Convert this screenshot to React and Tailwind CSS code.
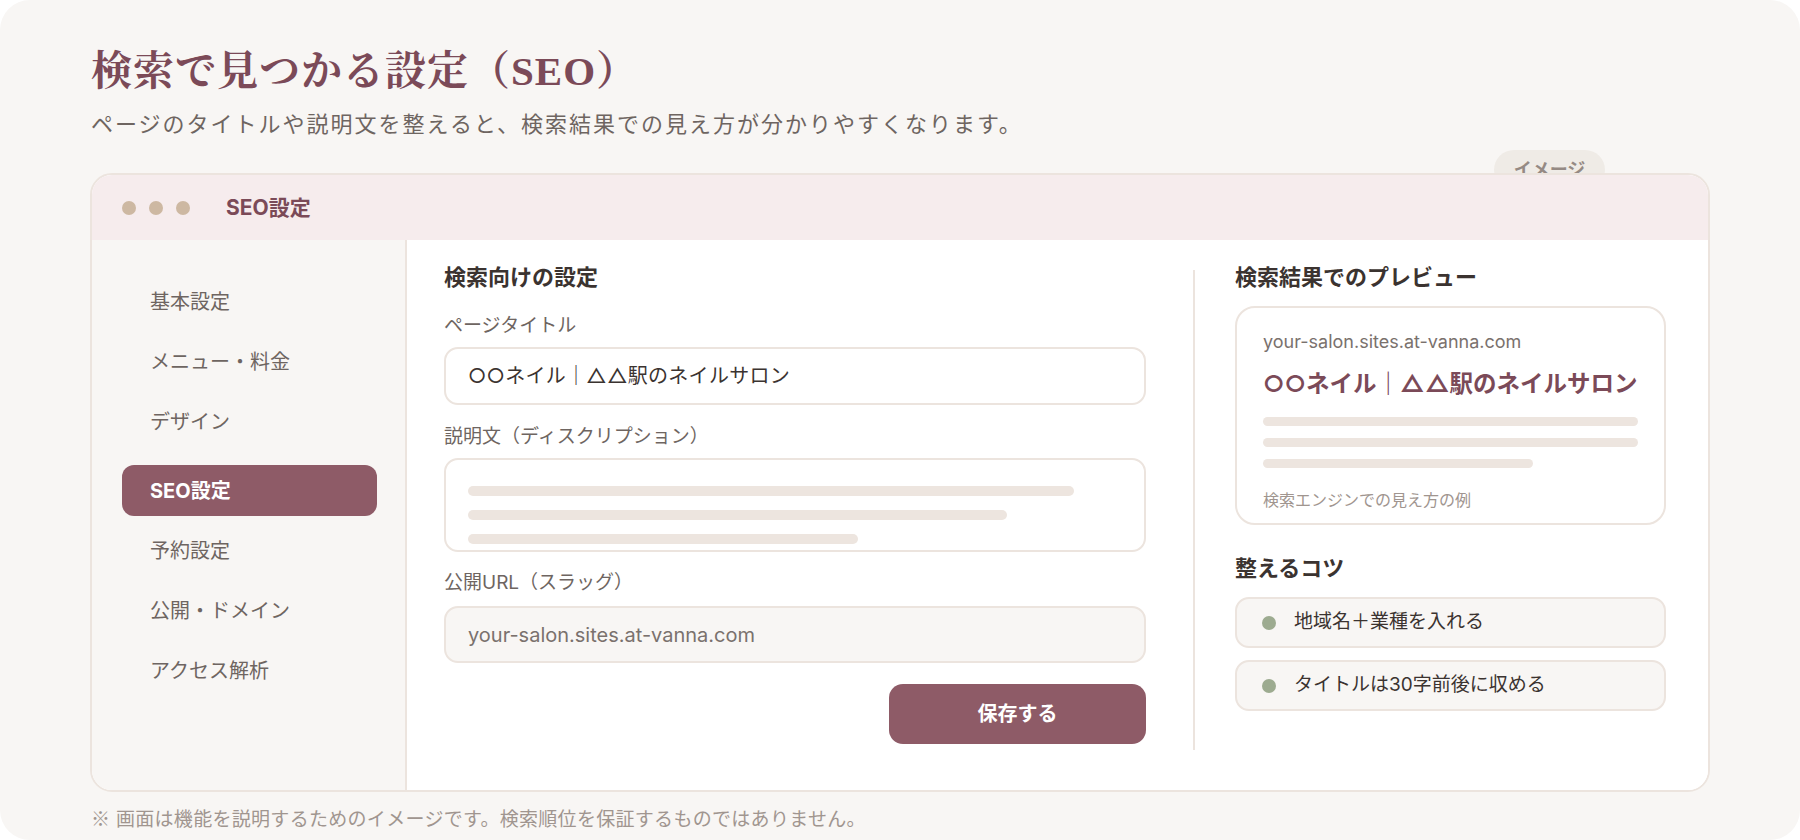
import React from 'react'

const sans = "font-['Inter','Noto_Sans_CJK_JP',sans-serif]"

const navItems = ['基本設定', 'メニュー・料金', 'デザイン', 'SEO設定', '予約設定', '公開・ドメイン', 'アクセス解析']

const Sidebar = () => {
  return (
    <div className="w-[315px] shrink-0 bg-[#f8f6f4] border-r-2 border-[#ece4de] pl-[30px] pr-[28px] pt-[36px] flex flex-col gap-[9px]">
      {navItems.map((item) =>
        item === 'SEO設定' ? (
          <div key={item} className="mt-[9px] h-[51px] flex items-center px-7 rounded-[12px] bg-[#8e5b67] text-white text-[20px] font-bold">
            {item}
          </div>
        ) : (
          <div key={item} className="h-[51px] flex items-center px-7 text-[20px] text-[#6e6561]">
            {item}
          </div>
        )
      )}
    </div>
  )
}

const SeoForm = () => {
  return (
    <div className="w-[702px] shrink-0 flex flex-col">
      <h2 className="text-[22px] leading-[28px] font-bold text-[#3b3330]">検索向けの設定</h2>

      <label className="mt-[22px] text-[19px] leading-[26px] text-[#6e6561]">ページタイトル</label>
      <div className="mt-[8px] h-[58px] border-2 border-[#ece4de] rounded-[14px] px-[22px] flex items-center text-[20px] tracking-[0.3px] text-[#3b3330]">
        ○○ネイル｜△△駅のネイルサロン
      </div>

      <label className="mt-[19px] text-[19px] leading-[26px] text-[#6e6561]">説明文（ディスクリプション）</label>
      <div className="mt-[8px] h-[94px] border-2 border-[#ece4de] rounded-[14px] px-[22px] pt-[26px] flex flex-col gap-[14px]">
        <div className="h-[10px] w-[606px] rounded-full bg-[#ede5df]" />
        <div className="h-[10px] w-[539px] rounded-full bg-[#ede5df]" />
        <div className="h-[10px] w-[390px] rounded-full bg-[#ede5df]" />
      </div>

      <label className="mt-[18px] text-[19px] leading-[26px] text-[#6e6561]">公開URL（スラッグ）</label>
      <div className="mt-[10px] h-[57px] border-2 border-[#ece4de] bg-[#f8f6f4] rounded-[14px] px-[22px] flex items-center text-[20px] text-[#7a716d]">
        your-salon.sites.at-vanna.com
      </div>

      <button className="mt-[21px] self-end w-[257px] h-[60px] rounded-[14px] bg-[#8e5b67] text-white text-[20px] font-bold">
        保存する
      </button>
    </div>
  )
}

const Preview = () => {
  const tips = ['地域名＋業種を入れる', 'タイトルは30字前後に収める']
  return (
    <div className="ml-[40px] w-[431px] shrink-0 flex flex-col">
      <h2 className="text-[22px] leading-[28px] font-bold text-[#3b3330]">検索結果でのプレビュー</h2>

      <div className="mt-[15px] h-[219px] shrink-0 border-2 border-[#ece4de] rounded-[20px] px-[26px] pt-[22px] flex flex-col">
        <div className="text-[18px] leading-[24px] text-[#7a716d]">your-salon.sites.at-vanna.com</div>
        <div className="mt-[14px] whitespace-nowrap text-[23.5px] leading-[32px] font-bold text-[#7b4a58]">○○ネイル｜△△駅のネイルサロン</div>
        <div className="mt-[17px] flex flex-col gap-[12px]">
          <div className="h-[9px] w-full rounded-full bg-[#ede5df]" />
          <div className="h-[9px] w-full rounded-full bg-[#ede5df]" />
          <div className="h-[9px] w-[270px] rounded-full bg-[#ede5df]" />
        </div>
        <div className="mt-[21px] text-[16px] leading-[22px] text-[#a0958f]">検索エンジンでの見え方の例</div>
      </div>

      <h2 className="mt-[29px] text-[22px] leading-[28px] font-bold text-[#3b3330]">整えるコツ</h2>
      <div className="mt-[15px] flex flex-col gap-[12px]">
        {tips.map((tip) => (
          <div key={tip} className="h-[51px] border-2 border-[#ece4de] bg-[#f8f6f4] rounded-[14px] pl-[25px] flex items-center gap-[18px]">
            <span className="w-[14px] h-[14px] rounded-full bg-[#9dab90]" />
            <span className="text-[19px] text-[#3b3330]">{tip}</span>
          </div>
        ))}
      </div>
    </div>
  )
}

const App = () => {
  return (
    <div className={`w-[1800px] h-[840px] bg-white ${sans}`}>
      <div className="h-full rounded-[30px] bg-[#f8f6f4] px-[90px] pt-[45px] flex flex-col">
        <h1 className="pl-px text-[41px] leading-[52px] font-bold tracking-[1px] text-[#7b4a58] font-['Liberation_Serif','Noto_Serif_CJK_JP','Noto_Sans_CJK_JP',serif]">
          検索で見つかる設定（SEO）
        </h1>
        <p className="pl-px mt-[11px] text-[22px] leading-[32px] tracking-[2px] text-[#6e6561]">
          ページのタイトルや説明文を整えると、検索結果での見え方が分かりやすくなります。
        </p>

        <div className="relative mt-[33px]">
          <div className="absolute right-[105px] -top-[23px] z-0 w-[111px] h-10 rounded-full bg-[#efebe6] flex justify-center pt-[7px] text-[18px] leading-[26px] font-bold text-[#958a84]">
            イメージ
          </div>

          <div className="relative z-10 border-2 border-[#ece4de] rounded-[22px] overflow-hidden bg-white">
            <div className="h-[65px] bg-[#f6eced] flex items-center pl-[30px]">
              <div className="flex gap-[13px]">
                <span className="w-[14px] h-[14px] rounded-full bg-[#cdb8a2]" />
                <span className="w-[14px] h-[14px] rounded-full bg-[#cdb8a2]" />
                <span className="w-[14px] h-[14px] rounded-full bg-[#cdb8a2]" />
              </div>
              <span className="ml-[36px] text-[21px] font-bold text-[#7b4a58]">SEO設定</span>
            </div>

            <div className="h-[550px] flex">
              <Sidebar />
              <div className="flex-1 bg-white flex pl-[37px] pt-[23px]">
                <SeoForm />
                <div className="ml-[47px] mt-[7px] w-[2px] h-[480px] bg-[#ece4de]" />
                <Preview />
              </div>
            </div>
          </div>
        </div>

        <p className="pl-px mt-[13px] text-[19px] leading-[26px] tracking-[0.3px] text-[#a0958f]">
          <span className="font-['Noto_Sans_CJK_JP',sans-serif]">※</span> 画面は機能を説明するためのイメージです。検索順位を保証するものではありません。
        </p>
      </div>
    </div>
  )
}

export default App
